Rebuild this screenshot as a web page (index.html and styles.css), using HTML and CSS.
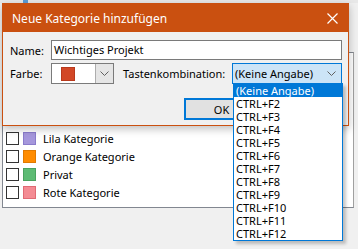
FILE: index.html
```html
<!DOCTYPE html>
<html lang="de">
<head>
  <meta charset="UTF-8">
  <title>Neue Kategorie hinzufügen</title>
  <link rel="stylesheet" href="styles.css">
</head>
<body>

  <!-- Fensterkante oben -->
  <div class="strip"><span class="strip-tab"></span></div>

  <div class="desk">

    <!-- Kategorienliste im Hintergrund -->
    <div class="catlist">
      <div class="cat"><span class="check"></span><span class="swatch lila"></span>Lila Kategorie</div>
      <div class="cat"><span class="check"></span><span class="swatch orange"></span>Orange Kategorie</div>
      <div class="cat"><span class="check"></span><span class="swatch gruen"></span>Privat</div>
      <div class="cat"><span class="check"></span><span class="swatch rot"></span>Rote Kategorie</div>
    </div>

    <!-- Dialog -->
    <div class="dialog">
      <div class="titlebar">
        <span>Neue Kategorie hinzufügen</span>
        <svg class="close" width="11" height="11" viewBox="0 0 11 11">
          <path d="M0.5 0.5 L10.5 10.5 M10.5 0.5 L0.5 10.5" stroke="#fff" stroke-width="1.2" fill="none"/>
        </svg>
      </div>

      <div class="dlg-body">
        <div class="row">
          <label class="lbl">Name:</label>
          <div class="textbox">Wichtiges Projekt</div>
        </div>

        <div class="row row-gap">
          <label class="lbl">Farbe:</label>
          <div class="colorbox">
            <span class="colorval"><span class="colorchip"></span></span>
            <span class="dropbtn">
              <svg width="9" height="5" viewBox="0 0 9 5"><path d="M0.5 0.5 L4.5 4.5 L8.5 0.5" stroke="#606060" fill="none"/></svg>
            </span>
          </div>
          <label class="keylabel">Tastenkombination:</label>
          <div class="combo">
            <span>(Keine Angabe)</span>
            <svg width="9" height="5" viewBox="0 0 9 5"><path d="M0.5 0.5 L4.5 4.5 L8.5 0.5" stroke="#606060" fill="none"/></svg>
          </div>
        </div>

        <div class="buttons">
          <button class="btn default">OK</button>
          <button class="btn">Abbrechen</button>
        </div>
      </div>

      <!-- aufgeklappte Liste -->
      <ul class="droplist">
        <li class="sel">(Keine Angabe)</li>
        <li>CTRL+F2</li>
        <li>CTRL+F3</li>
        <li>CTRL+F4</li>
        <li>CTRL+F5</li>
        <li>CTRL+F6</li>
        <li>CTRL+F7</li>
        <li>CTRL+F8</li>
        <li>CTRL+F9</li>
        <li>CTRL+F10</li>
        <li>CTRL+F11</li>
        <li>CTRL+F12</li>
      </ul>
    </div>

  </div>
</body>
</html>
```

FILE: styles.css
```css
/* Grundlayout */
html, body {
  height: 100%;
}
body {
  margin: 0;
  background: #f0f0f0;
  font-family: "Noto Sans", "Open Sans", sans-serif;
  font-size: 11px;
  color: #000;
  overflow: hidden;
}
.strip {
  height: 3px;
  background: #e8e8e8;
}
.strip-tab {
  display: block;
  width: 5px;
  height: 3px;
  margin-left: 23px;
  background: #5b9bd5;
}
.desk {
  position: relative;
  height: 246px;
  box-sizing: border-box;
  padding-top: 49px;
}

/* Liste im Hintergrund */
.catlist {
  margin-left: 2px;
  width: 352px;
  height: 156px;
  padding-top: 76px;
  box-sizing: border-box;
  background: #fff;
  border: 1px solid #828790;
  border-right-color: #a0a0a0;
}
.cat {
  display: flex;
  align-items: center;
  height: 18px;
  padding-left: 3px;
}
.check {
  width: 11px;
  height: 11px;
  border: 1px solid #333;
  background: #fff;
}
.swatch {
  width: 11px;
  height: 11px;
  margin: 0 7px 0 4px;
  border: 1px solid;
}
.lila   { background: #a597dc; border-color: #8a7ccb; }
.orange { background: #ff8c00; border-color: #e07a00; }
.gruen  { background: #5dbb74; border-color: #4aa25f; }
.rot    { background: #f48b93; border-color: #e06a74; }

/* Dialog */
.dialog {
  position: absolute;
  top: 0;
  left: 2px;
  width: 347px;
  height: 123px;
  box-sizing: border-box;
  border: 1px solid #ca5010;
  background: #f0f0f0;
  box-shadow: 0 3px 8px rgba(0,0,0,0.25);
}
.titlebar {
  display: flex;
  align-items: center;
  justify-content: space-between;
  height: 28px;
  padding: 0 10px 0 9px;
  background: #ca5010;
  color: #fff;
  font-size: 12px;
}
.dlg-body {
  padding: 8px 6px 0 7px;
}
.row {
  display: flex;
  align-items: center;
  height: 20px;
}
.row-gap {
  margin-top: 3px;
  height: 21px;
}
.lbl {
  width: 41px;
}
.textbox {
  flex: 1;
  height: 20px;
  line-height: 18px;
  box-sizing: border-box;
  padding-left: 2px;
  border: 1px solid #7a7a7a;
  background: #fff;
}

/* Farbauswahl */
.colorbox {
  display: flex;
  width: 63px;
  height: 21px;
  box-sizing: border-box;
  border: 1px solid #7a7a7a;
  background: #fff;
}
.colorval {
  flex: 1;
  display: flex;
  align-items: center;
  padding-left: 9px;
}
.colorchip {
  width: 12px;
  height: 12px;
  background: #d24726;
  border: 1px solid #b8391c;
}
.dropbtn {
  width: 17px;
  display: flex;
  align-items: center;
  justify-content: center;
  background: #e5e5e5;
  border-left: 1px solid #adadad;
}
.keylabel {
  margin-left: 9px;
}
.combo {
  display: flex;
  align-items: center;
  justify-content: space-between;
  margin-left: auto;
  width: 110px;
  height: 21px;
  box-sizing: border-box;
  padding: 0 5px 0 2px;
  border: 1px solid #0078d7;
  background: #cce4f7;
}

/* Buttons */
.buttons {
  display: flex;
  justify-content: flex-end;
  gap: 8px;
  margin-top: 14px;
}
.btn {
  width: 75px;
  height: 22px;
  font: inherit;
  color: #000;
  background: #e1e1e1;
  border: 1px solid #adadad;
}
.btn.default {
  border: 2px solid #0078d7;
}

/* aufgeklappte Liste */
.droplist {
  position: absolute;
  left: 230px;
  top: 79px;
  width: 110px;
  box-sizing: border-box;
  margin: 0;
  padding: 0;
  list-style: none;
  background: #fff;
  border: 1px solid #0078d7;
  box-shadow: 3px 3px 3px rgba(0,0,0,0.22);
}
.droplist li {
  height: 13px;
  line-height: 13px;
  padding-left: 2px;
}
.droplist li.sel {
  background: #0078d7;
  color: #fff;
}
```
